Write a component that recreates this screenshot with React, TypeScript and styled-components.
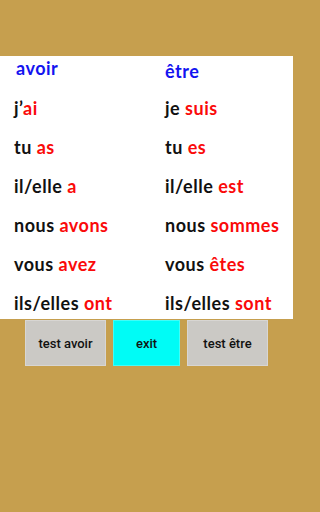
import React from "react";
import styled, { createGlobalStyle } from "styled-components";

const Global = createGlobalStyle`
  html, body { margin: 0; padding: 0; background: #c69f4e; }
  #root { min-height: 512px; }
`;

const Page = styled.div`
  width: 293px;
  height: 512px;
  background: #c69f4e;
  display: flex;
  flex-direction: column;
  padding-top: 56px;
  box-sizing: border-box;
`;

const Panel = styled.div`
  background: #ffffff;
  height: 263px;
  display: grid;
  grid-template-columns: 151px 1fr;
  overflow: hidden;
  font-family: Lato, "Open Sans", sans-serif;
  font-weight: 700;
  font-size: 18px;
  letter-spacing: 0.5px;
`;

const Column = styled.div<{ $left: number }>`
  display: flex;
  flex-direction: column;
  gap: 15px;
  padding-left: ${(p) => p.$left}px;
`;

const Header = styled.div<{ $shift: number; $indent: number }>`
  color: #1414f0;
  line-height: 24px;
  margin-top: ${(p) => p.$shift}px;
  margin-bottom: ${(p) => 1 - p.$shift}px;
  padding-left: ${(p) => p.$indent}px;
`;

const Row = styled.div`
  color: #111;
  line-height: 24px;
  white-space: nowrap;
`;

const Verb = styled.span`
  color: #fa0a0a;
`;

const Buttons = styled.div`
  display: flex;
  justify-content: center;
  gap: 7px;
  margin-top: 1px;
`;

const Button = styled.button<{ $w: number; $bg: string }>`
  width: ${(p) => p.$w}px;
  height: 46px;
  background: ${(p) => p.$bg};
  border: 1px solid rgba(255, 255, 255, 0.25);
  font-family: Roboto, sans-serif;
  font-weight: 500;
  font-size: 13px;
  color: #111;
  padding: 0;
`;

const avoir: [string, string, boolean][] = [
  ["j’", "ai", false],
  ["tu", "as", true],
  ["il/elle", "a", true],
  ["nous", "avons", true],
  ["vous", "avez", true],
  ["ils/elles", "ont", true],
];
const etre: [string, string, boolean][] = [
  ["je", "suis", true],
  ["tu", "es", true],
  ["il/elle", "est", true],
  ["nous", "sommes", true],
  ["vous", "êtes", true],
  ["ils/elles", "sont", true],
];

export default function App() {
  return (
    <>
      <Global />
      <Page>
        <Panel>
          <Column $left={14}>
            <Header $shift={0} $indent={2}>avoir</Header>
            {avoir.map(([p, v, sp]) => (
              <Row key={p}>
                {p}
                {sp ? " " : ""}
                <Verb>{v}</Verb>
              </Row>
            ))}
          </Column>
          <Column $left={14}>
            <Header $shift={3} $indent={0}>être</Header>
            {etre.map(([p, v, sp]) => (
              <Row key={p}>
                {p}
                {sp ? " " : ""}
                <Verb>{v}</Verb>
              </Row>
            ))}
          </Column>
        </Panel>
        <Buttons>
          <Button $w={81} $bg="#cbc9c5">test avoir</Button>
          <Button $w={67} $bg="#00fcf6">exit</Button>
          <Button $w={81} $bg="#cbc9c5">test être</Button>
        </Buttons>
      </Page>
    </>
  );
}
